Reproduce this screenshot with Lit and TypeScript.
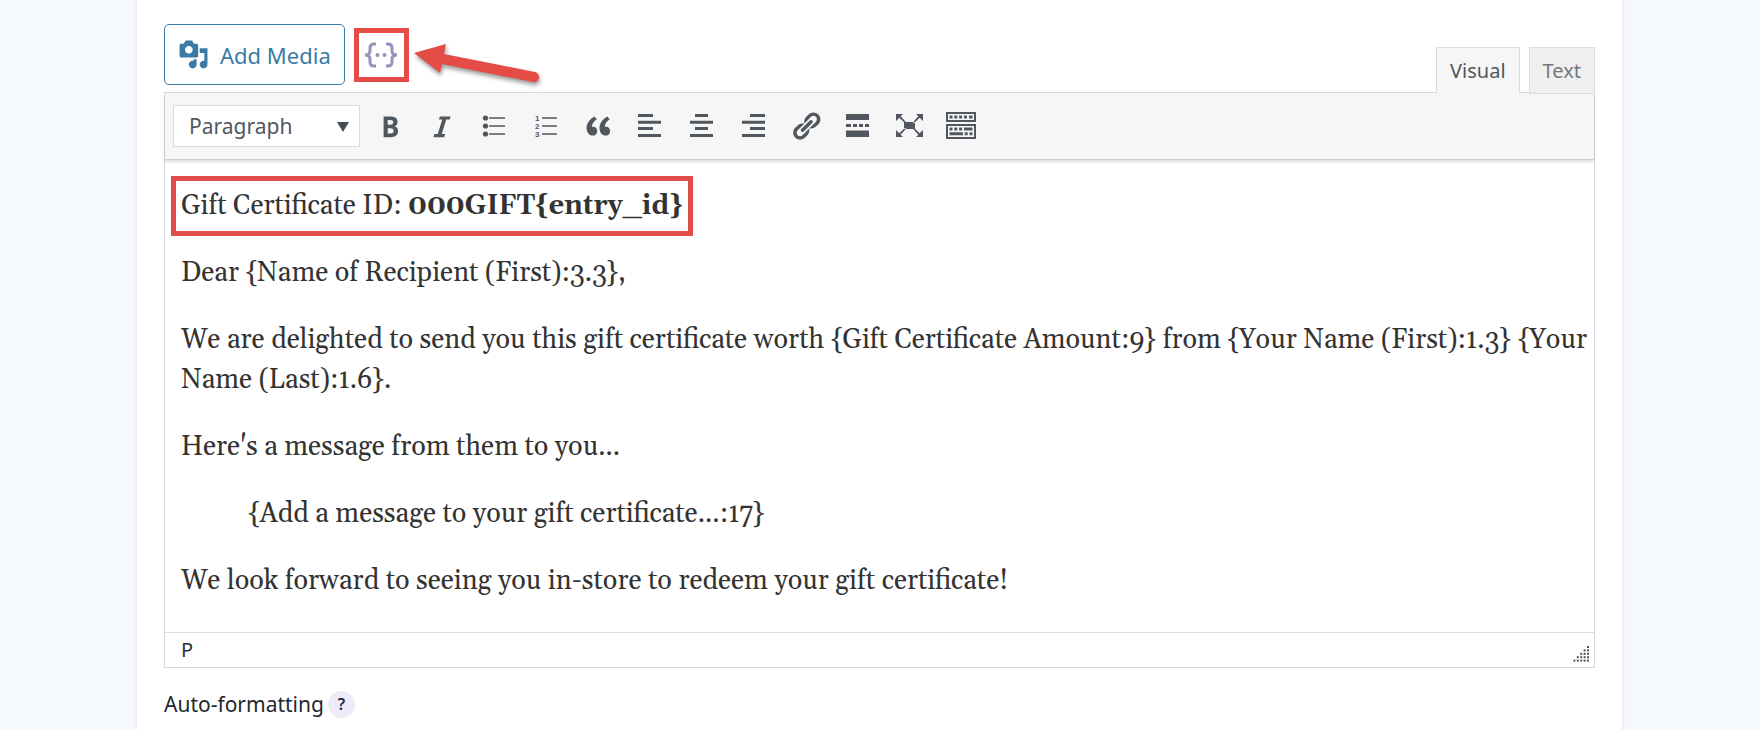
import { LitElement, html, css, svg } from "lit";
import { customElement, state } from "lit/decorators.js";
import { classMap } from "lit/directives/class-map.js";

const dash = (d: string) => html`<svg class="icon" viewBox="0 0 20 20" aria-hidden="true"><path d=${d}></path></svg>`;
const shape = (content: unknown) => html`<svg class="icon" viewBox="-16 -16 32 32" aria-hidden="true">${content}</svg>`;

const media = "M13 11V4c0-.55-.45-1-1-1h-1.67L9 1H5L3.67 3H2c-.55 0-1 .45-1 1v7c0 .55.45 1 1 1h10c.55 0 1-.45 1-1zM7 4.5c1.38 0 2.5 1.12 2.5 2.5S8.38 9.5 7 9.5 4.5 8.38 4.5 7 5.62 4.5 7 4.5zM14 6h5v10.5c0 1.38-1.12 2.5-2.5 2.5S14 17.88 14 16.5s1.12-2.5 2.5-2.5c.17 0 .34.02.5.05V9h-3V6zm-4 8.05V13h2v3.5c0 1.38-1.12 2.5-2.5 2.5S7 17.88 7 16.5 8.12 14 9.5 14c.17 0 .34.02.5.05z";
const bold = "M6 4v13h4.54c1.37 0 2.46-.33 3.26-1 .8-.66 1.2-1.58 1.2-2.77 0-.84-.17-1.51-.51-2.01s-.9-.85-1.67-1.03v-.09c.57-.1 1.02-.4 1.36-.9s.51-1.13.51-1.91c0-1.14-.39-1.98-1.17-2.5C12.75 4.26 11.5 4 9.78 4H6zm2.57 5.15V6.26h1.36c.73 0 1.27.11 1.61.32.34.22.51.58.51 1.07 0 .54-.16.92-.47 1.15s-.82.35-1.51.35h-1.5zm0 2.19h1.6c1.44 0 2.16.53 2.16 1.61 0 .6-.17 1.05-.51 1.34s-.86.43-1.57.43H8.57v-3.38z";
const italic = "M14.78 6h-2.13l-2.8 9h2.12l-.62 2H4.6l.62-2h2.14l2.8-9H8.03l.62-2h6.75z";
const quote = "M9.49 13.22c0-.74-.2-1.38-.61-1.9-.62-.78-1.83-.88-2.53-.72-.29-1.65 1.11-3.75 2.92-4.65L7.88 4c-2.73 1.3-5.42 4.28-4.96 8.05C3.21 14.43 4.59 16 6.54 16c.85 0 1.56-.25 2.12-.75s.83-1.18.83-2.03zm8.05 0c0-.74-.2-1.38-.61-1.9-.63-.78-1.83-.88-2.53-.72-.29-1.65 1.11-3.75 2.92-4.65L15.93 4c-2.73 1.3-5.41 4.28-4.95 8.05.29 2.38 1.66 3.95 3.61 3.95.85 0 1.56-.25 2.12-.75s.83-1.18.83-2.03z";
const link = "M17.74 2.76c1.68 1.69 1.68 4.41 0 6.1l-1.53 1.52c-1.12 1.12-2.7 1.47-4.14 1.09l2.62-2.61.76-.77.76-.76c.84-.84.84-2.2 0-3.04-.84-.85-2.2-.85-3.04 0l-.77.76-3.38 3.38c-.37-1.44-.02-3.02 1.1-4.14l1.52-1.53c1.69-1.68 4.42-1.68 6.1 0zM8.59 13.43l5.34-5.34c.42-.42.42-1.1 0-1.52-.44-.43-1.13-.39-1.53 0l-5.33 5.34c-.42.42-.42 1.1 0 1.52.44.43 1.13.39 1.52 0zm-.76 2.29l4.14-4.15c.38 1.44.03 3.02-1.09 4.14l-1.52 1.53c-1.69 1.68-4.41 1.68-6.1 0-1.68-1.68-1.68-4.42 0-6.1l1.53-1.52c1.12-1.12 2.7-1.47 4.14-1.1l-4.14 4.15c-.85.84-.85 2.2 0 3.05.84.84 2.2.84 3.04 0z";

const tools = [
  { label: "Bold", icon: dash(bold) },
  { label: "Italic", icon: dash(italic) },
  {
    label: "Bulleted list",
    icon: shape(svg`<circle cx="-8.500" cy="-8" r="2.600"/><circle cx="-8.500" cy="0" r="2.600"/><circle cx="-8.500" cy="8" r="2.600"/>
      <path d="M-5-8.700H11v1.400H-5zM-5-.700H11V.700H-5zM-5 7.300H11v1.400H-5z"/>`),
  },
  {
    label: "Numbered list",
    icon: shape(svg`<text class="digit" x="-11" y="-5">1</text><text class="digit" x="-11" y="3">2</text><text class="digit" x="-11" y="11">3</text>
      <path d="M-4-8.700H11v1.400H-4zM-4-.700H11V.700H-4zM-4 7.300H11v1.400H-4z"/>`),
  },
  { label: "Blockquote", icon: dash(quote) },
  { label: "Align left", icon: shape(svg`<path d="M-12-12H3v3h-15zM-12-5.300h23v3h-23zM-12 1H3v3h-15zM-12 8h23v3h-23z"/>`) },
  { label: "Align center", icon: shape(svg`<path d="M-7-12H6v3H-7zM-12-5.300h23v3h-23zM-7 1H6v3H-7zM-12 8h23v3h-23z"/>`) },
  { label: "Align right", icon: shape(svg`<path d="M-4-12h15v3H-4zM-12-5.300h23v3h-23zM-4 1h15v3H-4zM-12 8h23v3h-23z"/>`) },
  { label: "Insert link", icon: dash(link) },
  {
    label: "Read more",
    icon: shape(svg`<path d="M-12-12h23v6h-23zM-12-2h5v3h-5zM-5-2h4v3h-4zM1-2h4v3h-4zM7-2h4v3h-4zM-12 4.500h23v6.500h-23z"/>`),
  },
  {
    label: "Fullscreen",
    icon: shape(svg`<path d="M-6-4H5v7H-6zM-14-12h7l-2.300 2.300L-4-3.800l-1 1-5.700-5.500L-14-5zM13-12H6l2.300 2.300L3-3.800l1 1 5.700-5.500L13-5zM-14 11h7l-2.300-2.300L-4 2.800l-1-1-5.700 5.500L-14 4zM13 11H6l2.300-2.300L3 2.800l1-1 5.700 5.500L13 4z"/>`),
  },
  {
    label: "Toolbar toggle",
    icon: shape(svg`<path fill-rule="evenodd" d="M-16-14h30v10h-30zM-14-12v6h26v-6zM-16-2h30v15h-30zM-14 0v11h26V0z"/>
      <path d="M-12.500-10.500h3v3h-3zM-7.700-10.500h3v3h-3zM-2.900-10.500h3v3h-3zM2-10.500h3v3H2zM7-10.500h3.500v3H7zM-12.500 1.500h3v3h-3zM-7.700 1.500h3v3h-3zM-2.900 1.500h3v3h-3zM2 1.500h8.500v3H2zM-12.500 6.300H1v3h-13.500zM2.700 6.300h3v3h-3zM7.500 6.300h3v3h-3z"/>`),
  },
];

@customElement("app-root")
export class AppRoot extends LitElement {
  @state() private tab = "Visual";

  static styles = css`
    :host {
      display: block;
      min-height: 100vh;
      box-sizing: border-box;
      padding: 0 138px 0 137px;
      background: #f6f9fc;
      color: #23282d;
      font-family: "Segoe UI", "Noto Sans", "Open Sans", sans-serif;
      font-size: 20px;
      line-height: 28px;
    }
    * { box-sizing: border-box; }
    button, select { font: inherit; color: inherit; margin: 0; cursor: pointer; }
    .panel {
      min-height: 100vh;
      padding: 24px 27px 4px;
      background: #fff;
      box-shadow: 0 0 4px #d5dde6;
    }
    .head { display: flex; justify-content: space-between; align-items: flex-end; }
    .actions { display: flex; align-items: center; gap: 9px; margin-bottom: 7px; position: relative; }
    .media {
      display: flex; align-items: center; gap: 11px;
      height: 61px; padding: 0 13px;
      border: 1px solid #3a7ba5; border-radius: 5px;
      background: #fff; color: #3a7ba5; font-size: 22px;
    }
    .icon { display: block; width: 32px; height: 32px; fill: currentColor; }
    .media .icon { width: 31px; height: 31px; }
    .merge {
      display: grid; place-items: center;
      width: 55px; height: 54px; padding: 0;
      border: 5px solid #e64c46; background: #fff; color: #9a92b9;
    }
    .brace { width: 34px; height: 26px; fill: none; stroke: currentColor; stroke-width: 3; }
    .dot { fill: currentColor; stroke: none; }
    .pointer {
      position: absolute; left: 100%; top: 16px; width: 136px; height: 52px;
      fill: #e64c46; filter: drop-shadow(1px 3px 2px #0006);
    }
    .tabs { display: flex; gap: 9px; position: relative; margin-bottom: -2px; }
    .tab {
      height: 47px; padding: 0 13px;
      border: 1px solid #dcdcde; background: #efefef; color: #72777c;
    }
    .tab.active { background: #f6f6f6; color: #50575e; border-bottom-color: #f6f6f6; }
    .editor { border: 1px solid #d5d8dc; }
    .toolbar {
      display: flex; align-items: center; flex-wrap: wrap; gap: 6px;
      min-height: 67px; padding: 0 8px;
      background: #f6f6f6; color: #50575e;
      border-bottom: 1px solid #d0d0d0;
      box-shadow: 0 2px 3px #0002;
    }
    .format { position: relative; display: flex; width: 187px; }
    .format select {
      appearance: none; width: 100%; height: 42px; padding: 0 32px 0 15px;
      border: 1px solid #dcdcde; border-radius: 0; background: #fff; font-size: 21px;
    }
    .caret { position: absolute; right: 11px; top: 17px; width: 12px; height: 10px; fill: #444b52; pointer-events: none; }
    .tools { display: flex; flex-wrap: wrap; gap: 4px; }
    .tool { display: grid; place-items: center; width: 48px; height: 48px; padding: 0; border: 0; background: none; }
    .digit { font-family: "Liberation Sans", sans-serif; font-size: 8px; font-weight: 700; }
    .body {
      padding: 26px 6px 31px 16px; outline: none;
      color: #333; font-family: Georgia, Gelasio, "Liberation Serif", serif;
      font-size: 27px; line-height: 40px;
    }
    .body p { margin: 0 0 27px; }
    .body p:last-child { margin-bottom: 0; }
    .body .marked { width: fit-content; outline: 5px solid #e14d48; outline-offset: 5px; }
    .body .indent { padding-left: 67px; }
    .status {
      display: flex; justify-content: space-between; align-items: center;
      height: 35px; padding: 0 4px 0 16px;
      border-top: 1px solid #dcdcde; color: #2c3338;
    }
    .grip { width: 17px; height: 17px; fill: #555; margin-top: 8px; }
    .option { display: flex; align-items: center; gap: 4px; margin-top: 22px; font-size: 21px; }
    .help {
      width: 27px; height: 27px; padding: 0; border: 0; border-radius: 50%;
      background: #ecebf7; color: #242748; font-size: 16px; font-weight: 600; line-height: 27px;
    }
  `;

  render() {
    return html`
      <main class="panel">
        <div class="head">
          <div class="actions">
            <button class="media" type="button">${dash(media)}<span>Add Media</span></button>
            <button class="merge" type="button" aria-label="Insert merge tag">
              <svg class="brace" viewBox="0 0 34 26" aria-hidden="true">
                <path d="M12 2H10Q6 2 6 6V9Q6 13 1 13Q6 13 6 17V20Q6 24 10 24H12M22 2H24Q28 2 28 6V9Q28 13 33 13Q28 13 28 17V20Q28 24 24 24H22"></path>
                <circle class="dot" cx="13.500" cy="13" r="2"></circle><circle class="dot" cx="20.500" cy="13" r="2"></circle>
              </svg>
            </button>
            <svg class="pointer" viewBox="0 0 136 52" aria-hidden="true">
              <path d="M5 13L37 4L35 14L126 32A5 5 0 0 1 124 42L33 24L31 33Z"></path>
            </svg>
          </div>
          <div class="tabs" role="tablist">
            ${["Visual", "Text"].map(
              (name) => html`<button type="button" role="tab" aria-selected=${this.tab === name}
                class=${classMap({ tab: true, active: this.tab === name })}
                @click=${() => (this.tab = name)}>${name}</button>`,
            )}
          </div>
        </div>
        <section class="editor">
          <div class="toolbar" role="toolbar">
            <div class="format">
              <select aria-label="Text format"><option>Paragraph</option></select>
              <svg class="caret" viewBox="0 0 12 10" aria-hidden="true"><path d="M0 0H12L6 10Z"></path></svg>
            </div>
            <div class="tools">
              ${tools.map((t) => html`<button class="tool" type="button" aria-label=${t.label}>${t.icon}</button>`)}
            </div>
          </div>
          <div class="body" contenteditable="true" spellcheck="false" role="textbox" aria-multiline="true" aria-label="Message">
            <p class="marked">Gift Certificate ID: <strong>000GIFT{entry_id}</strong></p>
            <p>Dear {Name of Recipient (First):3.3},</p>
            <p>We are delighted to send you this gift certificate worth {Gift Certificate Amount:9} from {Your Name (First):1.3} {Your Name (Last):1.6}.</p>
            <p>Here's a message from them to you...</p>
            <p class="indent">{Add a message to your gift certificate...:17}</p>
            <p>We look forward to seeing you in-store to redeem your gift certificate!</p>
          </div>
          <div class="status">
            <span>P</span>
            <svg class="grip" viewBox="0 0 17 17" aria-hidden="true">
              ${[0, 1, 2, 3, 4].map((row) =>
                Array.from({ length: row + 1 }, (_, i) => svg`<rect x=${14 - i * 3.4} y=${row * 3.4} width="2" height="2"></rect>`),
              )}
            </svg>
          </div>
        </section>
        <div class="option">
          <span>Auto-formatting</span>
          <button class="help" type="button" aria-label="Help">?</button>
        </div>
      </main>
    `;
  }
}
